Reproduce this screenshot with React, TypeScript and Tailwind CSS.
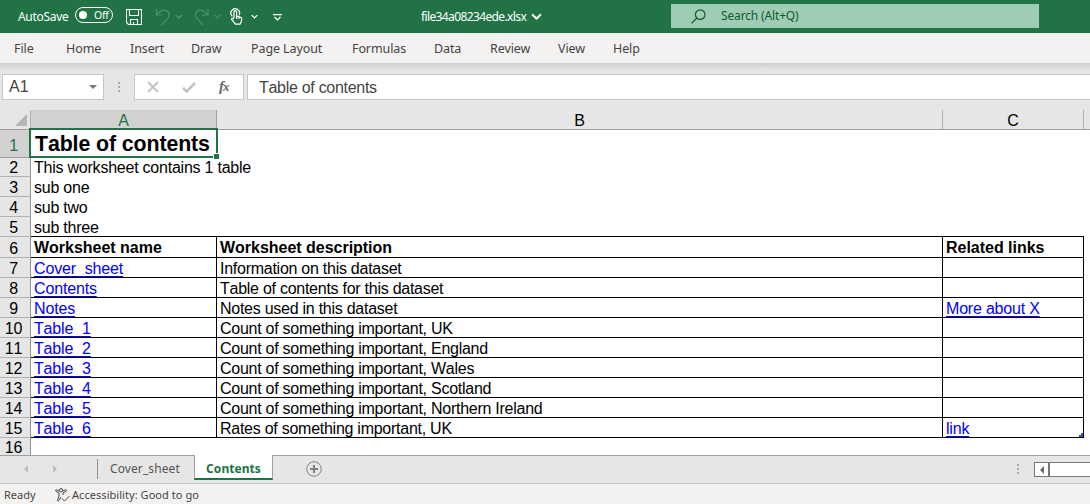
import React from 'react';

const ribbon: [string, string][] = [
  ['File', 'w-[52px]'],
  ['Home', 'w-[64px]'],
  ['Insert', 'w-[61px]'],
  ['Draw', 'w-[60px]'],
  ['Page Layout', 'w-[101px]'],
  ['Formulas', 'w-[82px]'],
  ['Data', 'w-[56px]'],
  ['Review', 'w-[68px]'],
  ['View', 'w-[55px]'],
  ['Help', 'w-[60px]'],
];

const intro = ['This worksheet contains 1 table', 'sub one', 'sub two', 'sub three'];

const entries: [string, string, string][] = [
  ['Cover_sheet', 'Information on this dataset', ''],
  ['Contents', 'Table of contents for this dataset', ''],
  ['Notes', 'Notes used in this dataset', 'More about X'],
  ['Table_1', 'Count of something important, UK', ''],
  ['Table_2', 'Count of something important, England', ''],
  ['Table_3', 'Count of something important, Wales', ''],
  ['Table_4', 'Count of something important, Scotland', ''],
  ['Table_5', 'Count of something important, Northern Ireland', ''],
  ['Table_6', 'Rates of something important, UK', 'link'],
];

function Chevron({ className }: { className: string }) {
  return (
    <svg className={className} viewBox="0 0 10 6" fill="none" stroke="currentColor" strokeWidth="1.8">
      <path d="M1 1l4 4 4-4" />
    </svg>
  );
}

function RowNumber({ n, active = false }: { n: number; active?: boolean }) {
  return (
    <div
      className={
        active
          ? 'flex w-[31px] shrink-0 items-end justify-center border-r border-b border-[#9f9f9f] bg-[#d2d2d2] pr-[3px] leading-[23px] text-[#217346]'
          : 'flex w-[31px] shrink-0 items-end justify-center border-r border-b border-r-[#8f8f8f] border-b-[#b1b1b1] bg-[#e6e6e6] pr-[3px] leading-[17px]'
      }
    >
      {n}
    </div>
  );
}

function Link({ children }: { children: string }) {
  return <span className="text-[#0000ff] underline decoration-1 underline-offset-2">{children}</span>;
}

function TitleBar() {
  return (
    <header className="flex h-[33px] shrink-0 items-center bg-[#217346] text-[12px] text-white">
      <span className="ml-[18px] w-[57px] tracking-[-0.3px]">AutoSave</span>
      <div className="mb-[3px] flex h-4 w-[38px] items-center rounded-full border border-white pl-[3px] text-[10.5px] tracking-[-0.3px]">
        <span className="mr-[7px] size-2 rounded-full bg-white" />
        <span className="pt-px">Off</span>
      </div>
      <svg className="ml-[13px] h-4 w-4" viewBox="0 0 16 16" fill="none" stroke="currentColor" strokeWidth="1.1">
        <path d="M.5.5h15v15H2.500L.5 13.500zM3.500.5v6h9V.5M4.500 15.500v-5h7v5M7.500 13v2.500" />
      </svg>
      <svg className="ml-[13px] h-4 w-[16px] text-[#4d8f6e]" viewBox="0 0 16 16" fill="none" stroke="currentColor" strokeWidth="1.2">
        <path d="M1.500 0v6h6M1.500 6l4-3.800C9.500-.5 14.500 2 14 6.500c-.3 2-1 3-2.300 4.200L6.500 16" />
      </svg>
      <Chevron className="ml-[4px] h-[5px] w-[8px] text-[#4d8f6e]" />
      <svg className="ml-[11px] h-4 w-[16px] text-[#4d8f6e]" viewBox="0 0 16 16" fill="none" stroke="currentColor" strokeWidth="1.2">
        <path d="M14 0v6H8M14 6l-4-3.800C6-.5 1 2 1.500 6.500c.3 2 1 3 2.300 4.200L9 16" />
      </svg>
      <Chevron className="ml-[4px] h-[5px] w-[7px] text-[#4d8f6e]" />
      <svg className="ml-[9px] h-[17px] w-[14px]" viewBox="0 0 14 17" fill="none" stroke="currentColor" strokeWidth="1.2">
        <path d="M2.200 8.200A4.300 4.300 0 1 1 9 7.200M4 10V4.200c0-2 2.600-2 2.600 0v4l3.900 1c1 .3 1.300.8 1.200 1.700l-.5 3.100-1.200 2.200H5.500l-3.700-4.500c-.7-1.100.5-2 1.400-1.300L4 11M6.600 8v3M9 9v2" />
      </svg>
      <Chevron className="ml-[7px] h-[5px] w-[7px]" />
      <svg className="mt-px ml-[15px] h-[7px] w-[9px]" viewBox="0 0 9 7" fill="none" stroke="currentColor" strokeWidth="1.2">
        <path d="M0 .6h9M1.500 3l3 3 3-3" />
      </svg>
      <span className="ml-[139px] w-[110px] tracking-[-0.62px]">file34a08234ede.xlsx</span>
      <Chevron className="h-[7px] w-[11px]" />
      <div className="mb-px ml-[129px] flex h-6 w-[368px] items-center bg-[#9fcdb3] text-[#0e5c2f]">
        <svg className="ml-5 h-[15px] w-[15px]" viewBox="0 0 15 15" fill="none" stroke="currentColor" strokeWidth="1.2">
          <circle cx="9.200" cy="5.600" r="4.800" />
          <path d="M5.800 9L.5 14.300" />
        </svg>
        <span className="ml-[15px] tracking-[-0.15px]">Search (Alt+Q)</span>
      </div>
    </header>
  );
}

function FormulaBar() {
  return (
    <div className="flex h-[47px] shrink-0 items-start bg-linear-to-b from-[#cfcfcf] via-[#e6e6e6] via-15% to-[#e6e6e6] pt-[11px] font-['Liberation_Sans',sans-serif] text-[16px] text-[#444]">
      <div className="ml-[2px] flex h-[26px] w-[102px] items-center justify-between border border-[#c6c6c6] bg-white pr-[6px] pl-[6px]">
        <span>A1</span>
        <span className="border-x-4 border-t-4 border-x-transparent border-t-[#777]" />
      </div>
      <div className="mt-[8px] ml-[14px] flex flex-col gap-[2px]">
        <i className="size-[2px] bg-[#aaa]" />
        <i className="size-[2px] bg-[#aaa]" />
        <i className="size-[2px] bg-[#aaa]" />
      </div>
      <div className="ml-[14px] flex h-[26px] w-[110px] items-center border border-[#c6c6c6] bg-white">
        <svg className="ml-[12px] size-[12px] text-[#c3c3c3]" viewBox="0 0 12 12" stroke="currentColor" strokeWidth="1.900">
          <path d="M1 1l10 10M11 1L1 11" />
        </svg>
        <svg className="ml-[23px] h-[11px] w-[14px] text-[#c3c3c3]" viewBox="0 0 14 11" fill="none" stroke="currentColor" strokeWidth="2.600">
          <path d="M1 6l3.700 3.500L13 1" />
        </svg>
        <span className="ml-[23px] pb-px font-['Liberation_Serif',serif] text-[15px] leading-none font-bold text-[#666] italic">
          f<span className="-ml-px text-[13px]">x</span>
        </span>
      </div>
      <div className="ml-[3px] flex h-[26px] flex-1 items-center border border-r-0 border-[#c6c6c6] bg-white pt-px pl-[11px] tracking-[-0.29px] [font-kerning:none]">
        Table of contents
      </div>
    </div>
  );
}

function Sheet() {
  return (
    <main className="flex h-[345px] shrink-0 flex-col overflow-hidden bg-white font-['Liberation_Sans',sans-serif] text-[16px] tracking-[-0.23px] text-black [font-kerning:none]">
      <div className="flex h-5 shrink-0 border-b border-[#9f9f9f] bg-[#e6e6e6] leading-[21px]">
        <div className="flex w-[31px] items-end justify-end border-r border-[#b1b1b1] pr-[3px] pb-[3px]">
          <svg className="size-3" viewBox="0 0 12 12">
            <path d="M12 0v12H0z" fill="#b5b5b5" />
          </svg>
        </div>
        <div className="w-[186px] border-r border-[#9f9f9f] bg-[#d2d2d2] text-center text-[#217346]">A</div>
        <div className="w-[726px] border-r border-[#b1b1b1] text-center">B</div>
        <div className="w-[141px] border-r border-[#b1b1b1] text-center">C</div>
      </div>
      <div className="flex h-7 shrink-0">
        <RowNumber n={1} active />
        <div className="relative -mt-[2px] -ml-[2px] h-[30px] w-[189px] border-2 border-[#217346] bg-white pl-[4px] text-[21.33px] leading-[29px] font-bold tracking-[-0.1px]">
          Table of contents
          <span className="absolute -right-[4px] -bottom-[4px] size-[7px] border border-white bg-[#217346]" />
        </div>
      </div>
      {intro.map((text, i) => (
        <div key={text} className={i === 0 ? 'flex h-[19px] shrink-0 leading-[20px]' : 'flex h-5 shrink-0 leading-[21px]'}>
          <RowNumber n={i + 2} />
          <span className="pl-[3px] whitespace-nowrap">{text}</span>
        </div>
      ))}
      <div className="flex h-[21px] shrink-0 leading-[21px] font-bold">
        <div className="flex font-normal">
          <RowNumber n={6} />
        </div>
        <div className="-mt-px flex border-y border-black tracking-[-0.02px]">
          <div className="w-[186px] border-r border-black pl-[3px]">Worksheet name</div>
          <div className="w-[726px] border-r border-black pl-[3px]">Worksheet description</div>
          <div className="w-[141px] border-r border-black pl-[3px]">Related links</div>
        </div>
      </div>
      {entries.map(([name, description, related], i) => (
        <div key={name} className="flex h-5 shrink-0 leading-[21px]">
          <RowNumber n={i + 7} />
          <div className="flex border-b border-black">
            <div className="w-[186px] border-r border-black pl-[3px] tracking-[-0.15px]">
              <Link>{name}</Link>
            </div>
            <div className="w-[726px] border-r border-black pl-[3px] tracking-[-0.26px]">{description}</div>
            <div className="flex w-[141px] items-start justify-between border-r border-black pl-[3px] tracking-[-0.2px]">
              {related ? <Link>{related}</Link> : <span />}
              {i === entries.length - 1 && (
                <svg className="size-1 self-end" viewBox="0 0 4 4">
                  <path d="M4 0v4H0V2h2V0z" fill="#3f51a5" />
                </svg>
              )}
            </div>
          </div>
        </div>
      ))}
      <div className="flex h-[17px] shrink-0">
        <div className="w-[31px] border-r border-[#8f8f8f] bg-[#e6e6e6] pt-[2px] pr-[3px] text-center leading-[16px]">16</div>
      </div>
    </main>
  );
}

function SheetTabs() {
  return (
    <div className="flex h-[29px] shrink-0 items-start border-y border-t-[#9f9f9f] border-b-[#c6c6c6] bg-[#e6e6e6] text-[12px] text-[#555]">
      <span className="mt-[9px] ml-[24px] border-y-4 border-r-4 border-y-transparent border-r-[#bdbdbd]" />
      <span className="mt-[9px] ml-[25px] border-y-4 border-l-4 border-y-transparent border-l-[#bdbdbd]" />
      <span className="mt-[3px] ml-[40px] h-5 border-l border-[#8f8f8f]" />
      <span className="w-[96px] pl-[12px] leading-[25px] tracking-[0.1px]">Cover_sheet</span>
      <div className="-mt-px h-[25px] w-[79px] border-x border-b-2 border-x-[#9f9f9f] border-b-[#217346] bg-white text-center leading-[27px] font-bold tracking-[0.05px] text-[#217346]">
        Contents
      </div>
      <svg className="mt-[5px] ml-[33px] size-4" viewBox="0 0 16 16" fill="none" stroke="#808080">
        <circle cx="8" cy="8" r="7.300" />
        <path d="M8 4v8M4 8h8" strokeWidth="2" />
      </svg>
      <div className="mt-[8px] ml-auto flex flex-col gap-[2px]">
        <i className="size-[2px] bg-[#aaa]" />
        <i className="size-[2px] bg-[#aaa]" />
        <i className="size-[2px] bg-[#aaa]" />
      </div>
      <div className="mt-[6px] ml-[15px] flex h-[15px] w-[56px] border border-r-0 border-[#777] bg-white">
        <div className="flex w-[15px] items-center justify-center border-r-2 border-[#777]">
          <span className="border-y-4 border-r-4 border-y-transparent border-r-[#666]" />
        </div>
      </div>
    </div>
  );
}

export default function App() {
  return (
    <div className="flex h-[504px] w-[1090px] flex-col overflow-hidden bg-[#f3f2f1] font-['Noto_Sans',sans-serif] whitespace-nowrap">
      <TitleBar />
      <nav className="flex h-[30px] shrink-0 items-center pt-[2px] pl-[14px] text-[12.5px] tracking-[-0.1px] text-[#444]">
        {ribbon.map(([label, width]) => (
          <span key={label} className={width}>
            {label}
          </span>
        ))}
      </nav>
      <FormulaBar />
      <Sheet />
      <SheetTabs />
      <footer className="flex h-5 items-center pt-[2px] pl-[4px] text-[11px] text-[#444]">
        <span className="w-[51px]">Ready</span>
        <svg className="h-[14px] w-[15px]" viewBox="0 0 15 14" fill="none" stroke="currentColor" strokeWidth="1">
          <circle cx="6" cy="2.300" r="1.700" />
          <path d="M4 3L1.500 1.800C.3 1.500.2 3 1 3.400L4 5v3l-1.500 4c-.3 1 1 1.500 1.500.500L6 9M8 3l2.500-1.200c1.200-.3 1.300 1.200.5 1.600L8 5v2M7 10.500L9.500 13l5-5" />
        </svg>
        <span className="ml-[2px] tracking-[0.05px]">Accessibility: Good to go</span>
      </footer>
    </div>
  );
}
